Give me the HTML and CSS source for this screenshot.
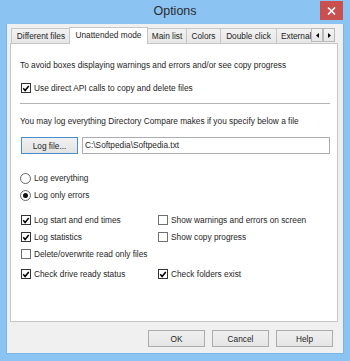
FILE: index.html
```html
<!DOCTYPE html>
<html>
<head>
<meta charset="utf-8">
<link rel="stylesheet" href="styles.css">
</head>
<body>
<div class="window">
  <div class="titlebar">
    <span></span>
    <span class="title">Options</span>
    <span class="close"><svg width="9" height="8" viewBox="0 0 9 8"><path d="M1 0.5 L8 7.5 M8 0.5 L1 7.5" stroke="#fff" stroke-width="1.6"/></svg></span>
  </div>
  <div class="client">
    <div class="tabstrip">
      <div class="tabs">
        <div class="tab t1">Different files</div>
        <div class="tab sel">Unattended mode</div>
        <div class="tab t3">Main list</div>
        <div class="tab t4">Colors</div>
        <div class="tab t5">Double click</div>
        <div class="tab t6">External</div>
      </div>
      <div class="arrows">
        <span class="arr"><svg width="3" height="5" viewBox="0 0 3 5"><path d="M3 0 L0 2.5 L3 5Z" fill="#000"/></svg></span>
        <span class="arr"><svg width="3" height="5" viewBox="0 0 3 5"><path d="M0 0 L3 2.5 L0 5Z" fill="#000"/></svg></span>
      </div>
    </div>
    <div class="panel">
      <div class="row r1">To avoid boxes displaying warnings and errors and/or see copy progress</div>
      <div class="row r2 opt"><span class="cb"><svg width="9" height="9" viewBox="0 0 9 9"><path d="M1.4 4.3 L3.5 6.8 L7.6 1.6" fill="none" stroke="#000" stroke-width="1.7"/></svg></span>Use direct API calls to copy and delete files</div>
      <div class="sep"></div>
      <div class="row r3">You may log everything Directory Compare makes if you specify below a file</div>
      <div class="filerow">
        <span class="btn default">Log file...</span>
        <span class="input">C:\Softpedia\Softpedia.txt</span>
      </div>
      <div class="row r4 opt"><span class="rb"></span>Log everything</div>
      <div class="row r5 opt"><span class="rb on"><span class="dot"></span></span>Log only errors</div>
      <div class="checks">
        <div class="row opt"><span class="cb"><svg width="9" height="9" viewBox="0 0 9 9"><path d="M1.4 4.3 L3.5 6.8 L7.6 1.6" fill="none" stroke="#000" stroke-width="1.7"/></svg></span>Log start and end times</div>
        <div class="row opt"><span class="cb off"></span>Show warnings and errors on screen</div>
        <div class="row opt"><span class="cb"><svg width="9" height="9" viewBox="0 0 9 9"><path d="M1.4 4.3 L3.5 6.8 L7.6 1.6" fill="none" stroke="#000" stroke-width="1.7"/></svg></span>Log statistics</div>
        <div class="row opt"><span class="cb off"></span>Show copy progress</div>
        <div class="row opt"><span class="cb off"></span>Delete/overwrite read only files</div>
        <div class="row"></div>
        <div class="row opt last"><span class="cb"><svg width="9" height="9" viewBox="0 0 9 9"><path d="M1.4 4.3 L3.5 6.8 L7.6 1.6" fill="none" stroke="#000" stroke-width="1.7"/></svg></span>Check drive ready status</div>
        <div class="row opt last"><span class="cb"><svg width="9" height="9" viewBox="0 0 9 9"><path d="M1.4 4.3 L3.5 6.8 L7.6 1.6" fill="none" stroke="#000" stroke-width="1.7"/></svg></span>Check folders exist</div>
      </div>
    </div>
    <div class="buttons">
      <span class="btn">OK</span>
      <span class="btn">Cancel</span>
      <span class="btn">Help</span>
    </div>
  </div>
</div>
</body>
</html>
```
FILE: styles.css
```css
* { box-sizing: border-box; }
html, body { margin: 0; padding: 0; }
body {
  width: 350px;
  height: 361px;
  overflow: hidden;
  font-family: "Liberation Sans", Arial, sans-serif;
  font-size: 8.3px;
  color: #1e1e1e;
}
.window {
  width: 350px;
  height: 361px;
  background: #8bc4f3;
  display: flex;
  flex-direction: column;
}
.titlebar {
  height: 24px;
  display: grid;
  grid-template-columns: 1fr auto 1fr;
  align-items: start;
}
.title {
  font-size: 12.5px;
  color: #2b2b2b;
  margin-top: 4px;
}
.close {
  justify-self: end;
  margin: 1px 7px 0 0;
  width: 23px;
  height: 19px;
  background: #c9504f;
  display: flex;
  align-items: center;
  justify-content: center;
}
.client {
  margin: 0 6px 7px;
  height: 330px;
  background: #f0f0f0;
  border: 1px solid #79b4e6;
  border-top: none;
  padding: 3px 0 0 3px;
  display: flex;
  flex-direction: column;
}
.tabstrip {
  display: flex;
  height: 16px;
  align-items: flex-end;
  position: relative;
  z-index: 1;
  width: 328px;
}
.tabs {
  display: flex;
  align-items: flex-end;
  width: 302px;
  height: 17px;
  overflow: hidden;
  margin-bottom: -1px;
  padding-left: 1px;
  flex: none;
}
.tab {
  height: 15px;
  border: 1px solid #c6c6c6;
  border-bottom: none;
  background: linear-gradient(#f2f2f2, #e6e6e6);
  margin-left: -1px;
  text-align: center;
  line-height: 14px;
  white-space: nowrap;
  flex: none;
  margin-bottom: 1px;
}
.t1 { width: 60px; margin-left: 0; }
.sel {
  width: 79px;
  height: 17px;
  background: #fff;
  margin-bottom: 0;
  margin-left: -2px;
  position: relative;
  z-index: 2;
  line-height: 14px;
}
.t3 { width: 40px; }
.t4 { width: 35px; }
.t5 { width: 57px; }
.t6 { width: 45px; text-align: left; padding-left: 4px; }
.arrows {
  display: flex;
  margin-left: -1px;
  margin-bottom: 1px;
}
.arr {
  width: 12px;
  height: 14px;
  border: 1px solid #b9b9b9;
  background: linear-gradient(#f4f4f4, #e6e6e6);
  display: flex;
  align-items: center;
  justify-content: center;
}
.panel {
  width: 328px;
  height: 279px;
  background: #fff;
  border: 1px solid #c6c6c6;
  padding: 0 0 0 9px;
  display: flex;
  flex-direction: column;
}
.row {
  height: 14px;
  line-height: 14px;
  white-space: nowrap;
}
.opt { display: flex; align-items: center; }
.r1 { margin-top: 14px; }
.r2 { margin-top: 9px; }
.sep {
  margin-top: 8px;
  width: 310px;
  height: 1px;
  background: #b4b4b4;
}
.r3 { margin-top: 10px; }
.filerow {
  margin-top: 9px;
  display: flex;
  height: 17px;
}
.btn {
  width: 57px;
  height: 17px;
  border: 1px solid #acacac;
  background: linear-gradient(#f0f0f0, #e5e5e5);
  display: flex;
  align-items: center;
  justify-content: center;
  flex: none;
}
.btn.default {
  border-color: #4a8fc8;
  background: linear-gradient(#f0f0f0, #e3e3e3);
  margin-left: 1px;
}
.input {
  margin-left: 4px;
  width: 248px;
  height: 17px;
  border: 1px solid #abadb3;
  padding-left: 2px;
  line-height: 15px;
  background: #fff;
}
.r4 { margin-top: 17px; }
.r5 { margin-top: 3px; }
.cb {
  width: 10px;
  height: 10px;
  border: 1px solid #333;
  background: #fff;
  margin: 0 3px 0 1px;
  display: flex;
  align-items: center;
  justify-content: center;
  flex: none;
}
.cb.off { border-color: #707070; }
.rb {
  width: 11px;
  height: 11px;
  border: 1px solid #666;
  border-radius: 50%;
  background: #fff;
  margin: 0 3px 0 0;
  display: flex;
  align-items: center;
  justify-content: center;
  flex: none;
}
.rb .dot {
  width: 5px;
  height: 5px;
  border-radius: 50%;
  background: #111;
}
.checks {
  margin-top: 11px;
  display: grid;
  grid-template-columns: 137px 1fr;
  row-gap: 3px;
}
.checks .last { margin-top: 3px; }
.buttons {
  margin-top: 8px;
  display: flex;
  justify-content: flex-end;
  gap: 6px;
  padding-right: 10px;
}
.buttons .btn + .btn { margin-left: 1px; }
```
